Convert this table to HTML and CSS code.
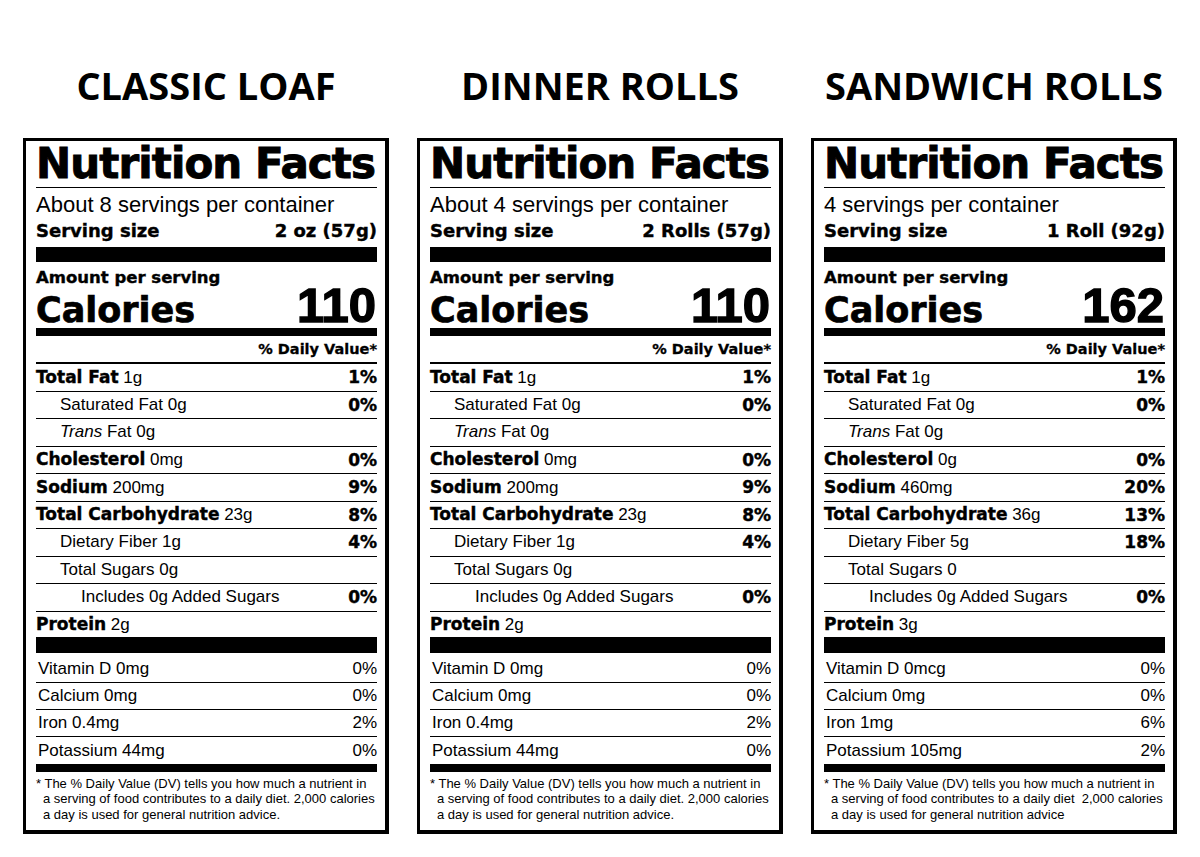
FILE: index.html
```html
<!DOCTYPE html>
<html lang="en">
<head>
<meta charset="utf-8">
<title>Nutrition Facts</title>
<link rel="stylesheet" href="styles.css">
</head>
<body>
<div class="page">
  <section class="col">
    <h2 class="heading">CLASSIC LOAF</h2>
    <div class="panel">
      <div class="title">Nutrition Facts</div>
      <div class="servings">About 8 servings per container</div>
      <div class="size"><span>Serving size</span><span>2 oz (57g)</span></div>
      <div class="bar bar-thick"></div>
      <div class="amount">Amount per serving</div>
      <div class="cal"><span class="cal-label">Calories</span><span class="cal-num">110</span></div>
      <div class="bar bar-med"></div>
      <div class="dvhead">% Daily Value*</div>
      <div class="row"><span><b>Total Fat</b> 1g</span><b>1%</b></div>
      <div class="row sub"><span>Saturated Fat 0g</span><b>0%</b></div>
      <div class="row sub"><span><i>Trans</i> Fat 0g</span></div>
      <div class="row"><span><b>Cholesterol</b> 0mg</span><b>0%</b></div>
      <div class="row"><span><b>Sodium</b> 200mg</span><b>9%</b></div>
      <div class="row"><span><b>Total Carbohydrate</b> 23g</span><b>8%</b></div>
      <div class="row sub"><span>Dietary Fiber 1g</span><b>4%</b></div>
      <div class="row sub"><span>Total Sugars 0g</span></div>
      <div class="row sub2"><span>Includes 0g Added Sugars</span><b>0%</b></div>
      <div class="row last"><span><b>Protein</b> 2g</span></div>
      <div class="bar bar-thick2"></div>
      <div class="vrow first"><span>Vitamin D 0mg</span><span>0%</span></div>
      <div class="vrow"><span>Calcium 0mg</span><span>0%</span></div>
      <div class="vrow"><span>Iron 0.4mg</span><span>2%</span></div>
      <div class="vrow last"><span>Potassium 44mg</span><span>0%</span></div>
      <div class="bar bar-med2"></div>
      <p class="foot">* The % Daily Value (DV) tells you how much a nutrient in<br>a serving of food contributes to a daily diet. 2,000 calories<br>a day is used for general nutrition advice.</p>
    </div>
  </section>

  <section class="col">
    <h2 class="heading">DINNER ROLLS</h2>
    <div class="panel">
      <div class="title">Nutrition Facts</div>
      <div class="servings">About 4 servings per container</div>
      <div class="size"><span>Serving size</span><span>2 Rolls (57g)</span></div>
      <div class="bar bar-thick"></div>
      <div class="amount">Amount per serving</div>
      <div class="cal"><span class="cal-label">Calories</span><span class="cal-num">110</span></div>
      <div class="bar bar-med"></div>
      <div class="dvhead">% Daily Value*</div>
      <div class="row"><span><b>Total Fat</b> 1g</span><b>1%</b></div>
      <div class="row sub"><span>Saturated Fat 0g</span><b>0%</b></div>
      <div class="row sub"><span><i>Trans</i> Fat 0g</span></div>
      <div class="row"><span><b>Cholesterol</b> 0mg</span><b>0%</b></div>
      <div class="row"><span><b>Sodium</b> 200mg</span><b>9%</b></div>
      <div class="row"><span><b>Total Carbohydrate</b> 23g</span><b>8%</b></div>
      <div class="row sub"><span>Dietary Fiber 1g</span><b>4%</b></div>
      <div class="row sub"><span>Total Sugars 0g</span></div>
      <div class="row sub2"><span>Includes 0g Added Sugars</span><b>0%</b></div>
      <div class="row last"><span><b>Protein</b> 2g</span></div>
      <div class="bar bar-thick2"></div>
      <div class="vrow first"><span>Vitamin D 0mg</span><span>0%</span></div>
      <div class="vrow"><span>Calcium 0mg</span><span>0%</span></div>
      <div class="vrow"><span>Iron 0.4mg</span><span>2%</span></div>
      <div class="vrow last"><span>Potassium 44mg</span><span>0%</span></div>
      <div class="bar bar-med2"></div>
      <p class="foot">* The % Daily Value (DV) tells you how much a nutrient in<br>a serving of food contributes to a daily diet. 2,000 calories<br>a day is used for general nutrition advice.</p>
    </div>
  </section>

  <section class="col">
    <h2 class="heading">SANDWICH ROLLS</h2>
    <div class="panel">
      <div class="title">Nutrition Facts</div>
      <div class="servings">4 servings per container</div>
      <div class="size"><span>Serving size</span><span>1 Roll (92g)</span></div>
      <div class="bar bar-thick"></div>
      <div class="amount">Amount per serving</div>
      <div class="cal"><span class="cal-label">Calories</span><span class="cal-num">162</span></div>
      <div class="bar bar-med"></div>
      <div class="dvhead">% Daily Value*</div>
      <div class="row"><span><b>Total Fat</b> 1g</span><b>1%</b></div>
      <div class="row sub"><span>Saturated Fat 0g</span><b>0%</b></div>
      <div class="row sub"><span><i>Trans</i> Fat 0g</span></div>
      <div class="row"><span><b>Cholesterol</b> 0g</span><b>0%</b></div>
      <div class="row"><span><b>Sodium</b> 460mg</span><b>20%</b></div>
      <div class="row"><span><b>Total Carbohydrate</b> 36g</span><b>13%</b></div>
      <div class="row sub"><span>Dietary Fiber 5g</span><b>18%</b></div>
      <div class="row sub"><span>Total Sugars 0</span></div>
      <div class="row sub2"><span>Includes 0g Added Sugars</span><b>0%</b></div>
      <div class="row last"><span><b>Protein</b> 3g</span></div>
      <div class="bar bar-thick2"></div>
      <div class="vrow first"><span>Vitamin D 0mcg</span><span>0%</span></div>
      <div class="vrow"><span>Calcium 0mg</span><span>0%</span></div>
      <div class="vrow"><span>Iron 1mg</span><span>6%</span></div>
      <div class="vrow last"><span>Potassium 105mg</span><span>2%</span></div>
      <div class="bar bar-med2"></div>
      <p class="foot">* The % Daily Value (DV) tells you how much a nutrient in<br>a serving of food contributes to a daily diet&nbsp; 2,000 calories<br>a day is used for general nutrition advice</p>
    </div>
  </section>
</div>
</body>
</html>
```

FILE: styles.css
```css
* { box-sizing: border-box; }

body {
  margin: 0;
  background: #fff;
  color: #000;
  font-family: "Liberation Sans", Arial, sans-serif;
}

.page {
  display: flex;
  gap: 28px;
  padding-left: 23px;
}

.col {
  width: 366px;
  flex: none;
}

.heading {
  margin: 60px 0 28px;
  height: 50px;
  line-height: 50px;
  text-align: center;
  font-family: "Open Sans", "Liberation Sans", sans-serif;
  font-weight: 700;
  font-size: 38px;
  white-space: nowrap;
}

.panel {
  border: solid #000;
  border-width: 3px 4px 4px 3px;
  padding: 0 8px 0 10px;
}

.title {
  height: 47px;
  line-height: 46px;
  border-bottom: 1px solid #000;
  font-family: "DejaVu Sans", sans-serif;
  font-weight: 700;
  font-size: 42px;
  letter-spacing: -0.9px;
  white-space: nowrap;
  -webkit-text-stroke: 0.9px #000;
}

.servings {
  height: 33px;
  line-height: 33px;
  font-size: 22px;
  white-space: nowrap;
}

.size {
  display: flex;
  justify-content: space-between;
  height: 20px;
  line-height: 20px;
  font-family: "DejaVu Sans", sans-serif;
  font-weight: 700;
  font-size: 18px;
  -webkit-text-stroke: 0.4px #000;
}

.bar { background: #000; }
.bar-thick { height: 15px; margin-top: 6px; }
.bar-med { height: 8px; margin-top: 4px; }
.bar-thick2 { height: 16px; }
.bar-med2 { height: 8px; }

.amount {
  padding-top: 7px;
  height: 24px;
  line-height: 17px;
  font-family: "DejaVu Sans", sans-serif;
  font-weight: 700;
  font-size: 16.5px;
  -webkit-text-stroke: 0.4px #000;
  white-space: nowrap;
}

.cal {
  display: flex;
  justify-content: space-between;
  align-items: baseline;
  height: 38px;
  line-height: 38px;
}

.cal-label {
  font-family: "DejaVu Sans", sans-serif;
  font-weight: 700;
  font-size: 35px;
  -webkit-text-stroke: 0.7px #000;
}

.cal-num {
  font-family: "Liberation Sans", Arial, sans-serif;
  font-weight: 700;
  font-size: 49px;
  -webkit-text-stroke: 1.4px #000;
  padding-right: 1px;
}

.dvhead {
  height: 28px;
  line-height: 26px;
  text-align: right;
  border-bottom: 2px solid #000;
  font-family: "DejaVu Sans", sans-serif;
  font-weight: 700;
  font-size: 14.5px;
  -webkit-text-stroke: 0.3px #000;
}

.row, .vrow {
  display: flex;
  justify-content: space-between;
  align-items: center;
  height: 27.5px;
  border-bottom: 1px solid #000;
  font-size: 17px;
  white-space: nowrap;
}

.row b {
  font-family: "DejaVu Sans", sans-serif;
  font-weight: 700;
  font-size: 17px;
  -webkit-text-stroke: 0.4px #000;
}

.row.sub { padding-left: 24px; }
.row.sub2 { padding-left: 45px; }
.row.last { height: 25px; border-bottom: 0; }

.vrow { height: 27px; padding-left: 2px; }
.vrow.first { height: 30.5px; padding-top: 4px; }
.vrow.last { border-bottom: 0; }

.foot {
  margin: 0;
  padding: 3.5px 0 8px 7px;
  text-indent: -7px;
  font-size: 13px;
  line-height: 15.5px;
  white-space: nowrap;
}
```
